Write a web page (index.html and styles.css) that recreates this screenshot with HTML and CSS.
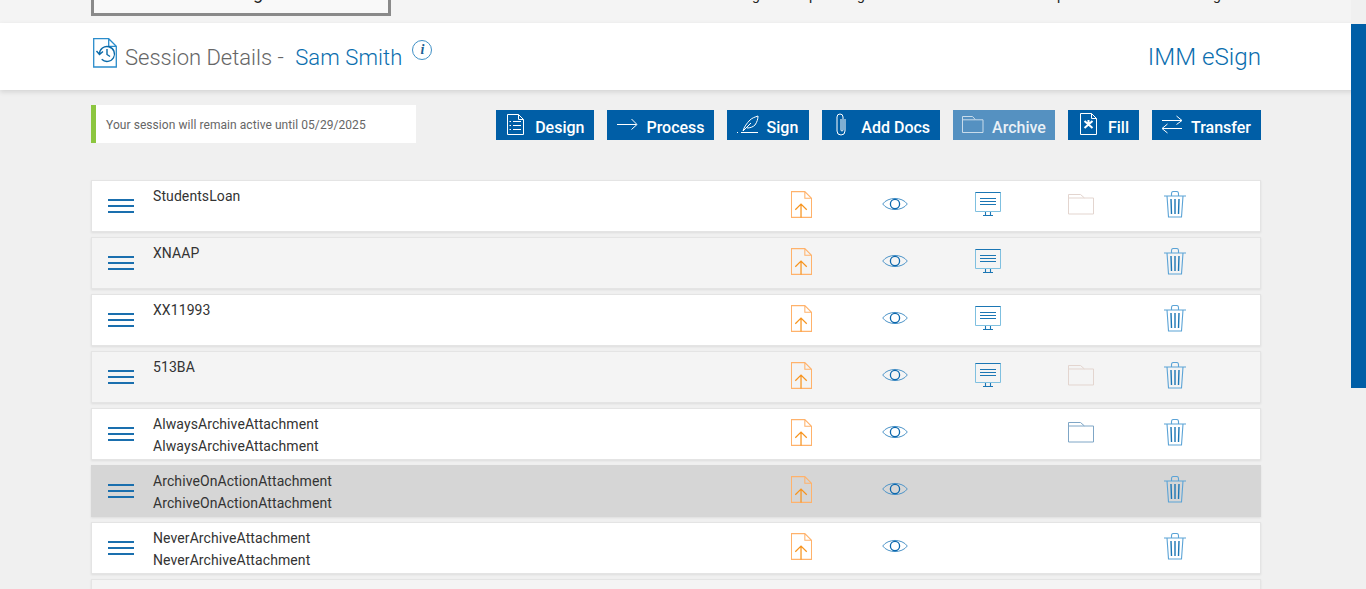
FILE: index.html
```html
<!DOCTYPE html>
<html lang="en">
<head>
<meta charset="utf-8">
<title>Session Details</title>
<link rel="stylesheet" href="styles.css">
</head>
<body>
<svg class="sprite" width="0" height="0" aria-hidden="true">
  <symbol id="file" viewBox="0 0 22 28">
    <path class="file-line" d="M.5.500h14l7 7v20H.5zM14.500.500v7h7"/>
    <path class="file-arrow" d="M10.500 27.500V13.500M4.500 19.500l6-6 6 6"/>
  </symbol>
  <symbol id="eye" viewBox="0 0 26 18">
    <path class="eye-line" d="M.7 9C6 1.600 20 1.600 25.300 9 20 16.400 6 16.400.7 9z"/>
    <circle class="eye-pupil" cx="13" cy="9" r="4.600"/>
  </symbol>
  <symbol id="monitor" viewBox="0 0 26 26">
    <path class="mon-line" d="M.5.500h25v19H.5z"/>
    <path class="mon-top" d="M.5.500h25M5 6.500h16M5 9.500h16M5 12.500h16M10.500 20v4M15.500 20v4M8 23.500h10"/>
  </symbol>
  <symbol id="folder" viewBox="0 0 26 22">
    <path d="M.5 21V1.500h12l4 3.500h9v16zM.5 5h16"/>
  </symbol>
  <symbol id="trash" viewBox="0 0 22 27">
    <path class="trash-line" d="M0 5h22M7.500 5V2.500q0-2 2-2h3q2 0 2 2V5M3 5l1.500 21h13L19 5"/>
    <path class="trash-bars" d="M7 8l.5 15M11 8v15M15 8l-.5 15"/>
  </symbol>
</svg>

<div class="scrollbar"><div class="thumb"></div></div>

<div class="topstrip">
  <div class="wrap topstrip-inner">
    <div class="topbox"><span class="topbox-text">Design</span></div>
    <nav class="topnav">
      <span>g</span><span>p</span><span>g</span><span>p</span><span>g</span>
    </nav>
  </div>
</div>

<header class="header">
  <div class="wrap header-inner">
    <div class="title-group">
      <svg class="title-icon" width="24" height="30" viewBox="0 0 24 30">
        <path class="ti-page" d="M.7.700h15l7.600 7.600v20.700H.7zM15.700.700v7.600h7.600"/>
        <path class="ti-clock" d="M6.500 16a7.500 7.500 0 1 1 2.200 5.300M3.500 13l3 3.500 3.500-3M14 11v5.500l3 2"/>
      </svg>
      <h1 class="title">Session Details - <span class="title-name">Sam Smith</span></h1>
      <span class="info">i</span>
    </div>
    <div class="brand">IMM eSign</div>
  </div>
</header>

<main class="wrap">
  <section class="toolbar">
    <div class="notice">Your session will remain active until 05/29/2025</div>
    <div class="actions">
      <a class="btn"><svg class="btn-icon" viewBox="0 0 30 30"><path d="M2.500 4.500h11l5 5v15h-16zM13.500 4.500v5h5M8 11.500h8M8 15.500h8M8 19.500h8M4.500 11.500h1.500M4.500 15.500h1.500M4.500 19.500h1.500"/></svg>Design</a>
      <a class="btn btn-narrow"><svg class="btn-icon" viewBox="0 0 30 30"><path d="M1 14.500h19.500M15.500 9l5.500 5.500-5.500 5"/></svg>Process</a>
      <a class="btn btn-wide btn-sign"><svg class="btn-icon" viewBox="0 0 31 30"><path d="M1 22.500h1M5 22.500h17M7 21c1-4 4-8 7-11 2-2 5-3 8-4 0 3-1 6-3 9-2 2-5 3-8 3M7 21l8-8"/></svg>Sign</a>
      <a class="btn"><svg class="btn-icon" viewBox="0 0 30 30"><path d="M14 9v12a4 4 0 0 1-8 0V7a3 3 0 0 1 6 0v13a1 1 0 0 1-2 0V9"/></svg>Add Docs</a>
      <a class="btn btn-muted btn-narrow"><svg class="btn-icon" viewBox="0 0 30 30"><path d="M.5 22.500V6.500h10l3 3.300h7.500v12.700zM.5 9.800h13"/></svg>Archive</a>
      <a class="btn btn-wide"><svg class="btn-icon" viewBox="0 0 31 30"><path class="thin" d="M3.500 3.500h11l5 5v16h-16zM14.500 3.500v5h5"/><path class="bold" d="M7.500 11l8 7M15.500 11l-8 7M11.500 10v4"/></svg>Fill</a>
      <a class="btn"><svg class="btn-icon" viewBox="0 0 30 30"><path d="M1 10.500h19.500M15.500 6l5.500 4.500-5.500 4M21 18.500H1.500M6.500 14l-5.500 4.500 5.500 4.500"/></svg>Transfer</a>
    </div>
  </section>

  <section class="rows">
    <article class="row">
      <svg class="burger" viewBox="0 0 26 14"><path d="M0 1h26M0 7h26M0 13h26"/></svg>
      <div class="names"><div>StudentsLoan</div></div>
      <svg class="ic ic-file"><use href="#file"/></svg>
      <svg class="ic ic-eye"><use href="#eye"/></svg>
      <svg class="ic ic-mon"><use href="#monitor"/></svg>
      <svg class="ic ic-folder faint"><use href="#folder"/></svg>
      <svg class="ic ic-trash"><use href="#trash"/></svg>
    </article>
    <article class="row">
      <svg class="burger" viewBox="0 0 26 14"><path d="M0 1h26M0 7h26M0 13h26"/></svg>
      <div class="names"><div>XNAAP</div></div>
      <svg class="ic ic-file"><use href="#file"/></svg>
      <svg class="ic ic-eye"><use href="#eye"/></svg>
      <svg class="ic ic-mon"><use href="#monitor"/></svg>
      <span class="slot"></span>
      <svg class="ic ic-trash"><use href="#trash"/></svg>
    </article>
    <article class="row">
      <svg class="burger" viewBox="0 0 26 14"><path d="M0 1h26M0 7h26M0 13h26"/></svg>
      <div class="names"><div>XX11993</div></div>
      <svg class="ic ic-file"><use href="#file"/></svg>
      <svg class="ic ic-eye"><use href="#eye"/></svg>
      <svg class="ic ic-mon"><use href="#monitor"/></svg>
      <span class="slot"></span>
      <svg class="ic ic-trash"><use href="#trash"/></svg>
    </article>
    <article class="row">
      <svg class="burger" viewBox="0 0 26 14"><path d="M0 1h26M0 7h26M0 13h26"/></svg>
      <div class="names"><div>513BA</div></div>
      <svg class="ic ic-file"><use href="#file"/></svg>
      <svg class="ic ic-eye"><use href="#eye"/></svg>
      <svg class="ic ic-mon"><use href="#monitor"/></svg>
      <svg class="ic ic-folder faint"><use href="#folder"/></svg>
      <svg class="ic ic-trash"><use href="#trash"/></svg>
    </article>
    <article class="row">
      <svg class="burger" viewBox="0 0 26 14"><path d="M0 1h26M0 7h26M0 13h26"/></svg>
      <div class="names"><div>AlwaysArchiveAttachment</div><div>AlwaysArchiveAttachment</div></div>
      <svg class="ic ic-file"><use href="#file"/></svg>
      <svg class="ic ic-eye"><use href="#eye"/></svg>
      <span class="slot"></span>
      <svg class="ic ic-folder"><use href="#folder"/></svg>
      <svg class="ic ic-trash"><use href="#trash"/></svg>
    </article>
    <article class="row row-selected">
      <svg class="burger" viewBox="0 0 26 14"><path d="M0 1h26M0 7h26M0 13h26"/></svg>
      <div class="names"><div>ArchiveOnActionAttachment</div><div>ArchiveOnActionAttachment</div></div>
      <svg class="ic ic-file"><use href="#file"/></svg>
      <svg class="ic ic-eye"><use href="#eye"/></svg>
      <span class="slot"></span>
      <span class="slot"></span>
      <svg class="ic ic-trash"><use href="#trash"/></svg>
    </article>
    <article class="row">
      <svg class="burger" viewBox="0 0 26 14"><path d="M0 1h26M0 7h26M0 13h26"/></svg>
      <div class="names"><div>NeverArchiveAttachment</div><div>NeverArchiveAttachment</div></div>
      <svg class="ic ic-file"><use href="#file"/></svg>
      <svg class="ic ic-eye"><use href="#eye"/></svg>
      <span class="slot"></span>
      <span class="slot"></span>
      <svg class="ic ic-trash"><use href="#trash"/></svg>
    </article>
    <article class="row"></article>
  </section>
</main>
</body>
</html>
```

FILE: styles.css
```css
* { box-sizing: border-box; }

html, body {
  margin: 0;
  height: 589px;
  overflow: hidden;
}

body {
  position: relative;
  width: 1366px;
  background: #f0f0f0;
  font-family: Roboto, "Liberation Sans", sans-serif;
  color: #333;
}

.sprite { position: absolute; }

.wrap {
  width: 1170px;
  margin-left: 91px;
}

/* scrollbar overlay */
.scrollbar {
  position: absolute;
  top: 0;
  right: 0;
  bottom: 0;
  width: 15px;
  z-index: 5;
  background: #f0f0f0;
}
.thumb {
  margin-top: 24px;
  height: 364px;
  background: #005ea6;
}

/* clipped top strip */
.topstrip {
  height: 23px;
  background: #f4f4f4;
  overflow: hidden;
}
.topstrip-inner { display: flex; }
.topbox {
  width: 300px;
  height: 16px;
  border: 3px solid #8a8a8a;
  border-top: 0;
  background: #f9f9f9;
  overflow: hidden;
  padding-left: 124px;
}
.topbox-text {
  display: block;
  margin-top: -17px;
  font-size: 18px;
  line-height: 20px;
  color: #222;
}
.topnav {
  display: grid;
  grid-template-columns: 57px 48px 200px 156px 20px;
  margin-left: 361px;
  margin-top: -15px;
  font-size: 14px;
  line-height: 20px;
  color: #222;
}

/* header */
.header {
  height: 67px;
  background: #fff;
  box-shadow: 0 2px 5px rgba(0, 0, 0, .12);
}
.header-inner {
  display: flex;
  justify-content: space-between;
  padding-top: 15px;
}
.title-group { display: flex; align-items: flex-start; }
.title-icon { margin-left: 2px; flex: none; }
.ti-page { fill: none; stroke: #2a8ccb; stroke-width: 1.300; }
.ti-clock { fill: none; stroke: #0b6aa8; stroke-width: 1.400; }
.title {
  margin: 5px 0 0 8px;
  font-size: 22px;
  line-height: 29px;
  font-weight: 300;
  color: #666;
}
.title-name { color: #0b6eae; margin-left: 6px; letter-spacing: .1px; }
.info {
  width: 20px;
  height: 20px;
  margin: 2px 0 0 10px;
  border: 1px solid #3f90c6;
  border-radius: 50%;
  font-family: "Liberation Serif", serif;
  font-style: italic;
  font-weight: 700;
  font-size: 14px;
  line-height: 17px;
  text-align: center;
  color: #1b5f94;
}
.brand {
  margin-top: 5px;
  font-size: 24.200px;
  line-height: 29px;
  font-weight: 300;
  color: #0b6eae;
}

/* toolbar */
.toolbar {
  display: flex;
  justify-content: space-between;
  align-items: flex-start;
  padding-top: 15px;
  height: 90px;
}
.notice {
  width: 325px;
  height: 38px;
  padding-left: 10px;
  border-left: 5px solid #8cc63f;
  background: #fff;
  font-size: 12px;
  line-height: 41px;
  letter-spacing: .06px;
  color: #666;
}
.actions {
  display: flex;
  gap: 13px;
  margin-top: 5px;
}
.btn {
  display: flex;
  height: 30px;
  padding: 0 10px 0 9px;
  background: #005ea6;
  color: #fff;
  font-size: 16px;
  font-weight: 500;
  line-height: 35px;
}
.btn-narrow { padding-right: 9px; }
.btn-sign { padding-right: 11px; }
.btn-muted { background: #5591c1; color: #e9f0f6; }
.btn-icon {
  width: 30px;
  height: 30px;
  flex: none;
  fill: none;
  stroke: #fff;
  stroke-width: 1;
}
.btn-wide .btn-icon { width: 31px; }
.btn-muted .btn-icon { stroke: #c9dceb; }
.btn-icon .bold { stroke-width: 2; }

/* rows */
.rows {
  display: flex;
  flex-direction: column;
  gap: 5px;
}
.row {
  display: grid;
  grid-template-columns: 45px 638px 91px 93px 93px 96px 1fr;
  height: 52px;
  flex: none;
  padding-left: 16px;
  background: #fff;
  border: 1px solid #e4e4e4;
  box-shadow: 0 1px 2px rgba(0, 0, 0, .08);
}
.row:nth-child(even) { background: #f4f4f4; }
.row.row-selected { background: #d6d6d6; border-color: #d6d6d6; }

.burger {
  width: 26px;
  height: 14px;
  margin-top: 18px;
  fill: none;
  stroke: #1a6fae;
  stroke-width: 2;
}
.names {
  padding-top: 4px;
  font-size: 14px;
  line-height: 22px;
  letter-spacing: .09px;
  color: #333;
}
.ic { display: block; fill: none; }
.ic-file { width: 21px; height: 27px; margin-top: 10px; }
.ic-eye { width: 26px; height: 18px; margin-top: 14px; }
.ic-mon { width: 26px; height: 26px; margin-top: 11px; }
.ic-folder { width: 26px; height: 22px; margin-top: 12px; stroke: #7fa6c6; }
.ic-folder.faint { stroke: #e3d5cf; }
.ic-trash { width: 22px; height: 27px; margin-top: 10px; }

.file-line { stroke: #ffb26b; stroke-width: 1.100; }
.file-arrow { stroke: #f7941e; stroke-width: 1.300; }
.eye-line { stroke: #4d94c8; stroke-width: 1; }
.eye-pupil { stroke: #0b67ad; stroke-width: 1.300; }
.mon-line { stroke: #7fc0e0; stroke-width: 1; }
.mon-top { stroke: #1b76b4; stroke-width: 1.100; }
.trash-line { stroke: #5ba3d6; stroke-width: 1.100; }
.trash-bars { stroke: #1b76b4; stroke-width: 1.400; }
```
